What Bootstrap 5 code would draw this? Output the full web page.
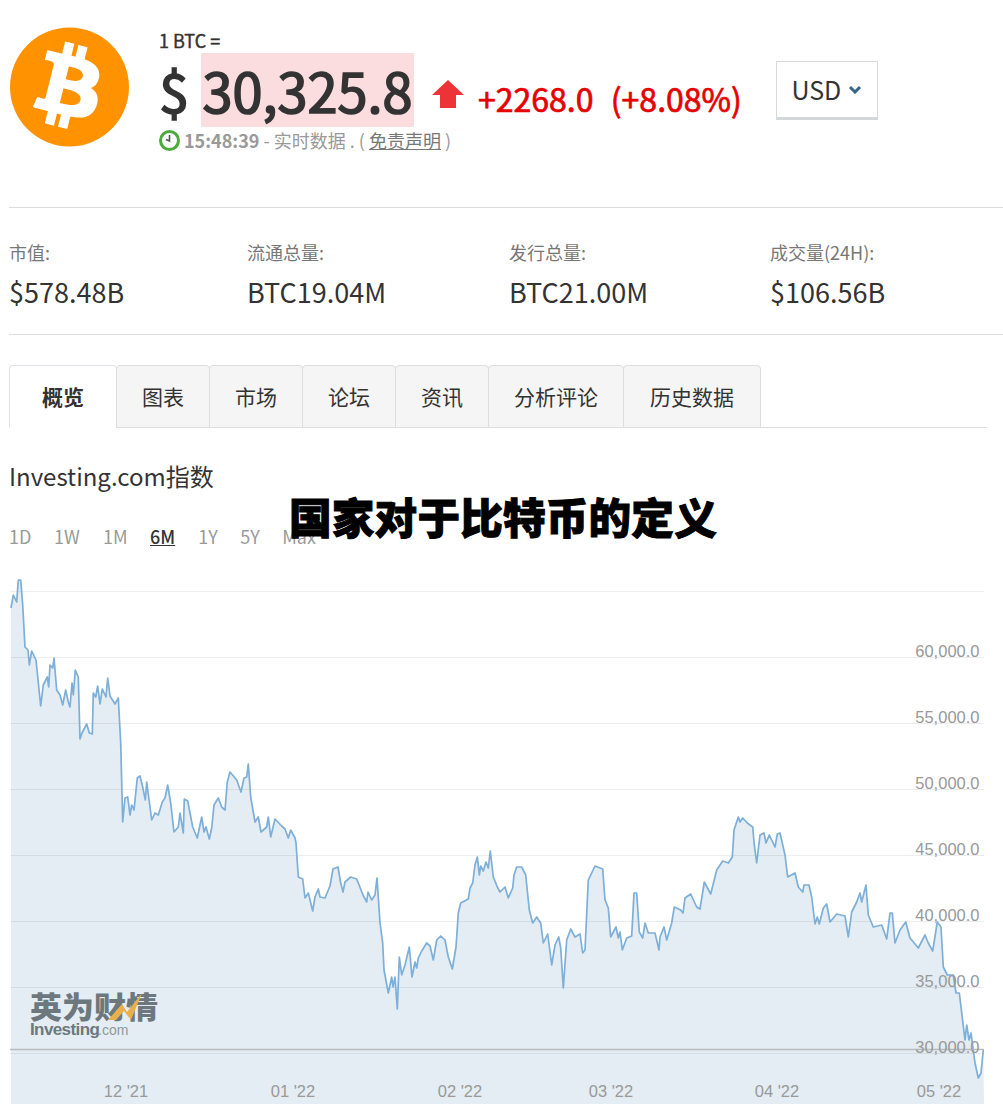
<!DOCTYPE html>
<html lang="zh-CN">
<head>
    <meta charset="UTF-8">
    <meta name="viewport" content="width=device-width, initial-scale=1.0">
    <title>国家对于比特币的定义</title>
    <link href="https://cdn.jsdelivr.net/npm/bootstrap@5.3.0/dist/css/bootstrap.min.css" rel="stylesheet">
    <style>
        body { font-family: "Noto Sans CJK SC", sans-serif; color: #333; background: #fff; width: 1003px; height: 1112px; overflow: hidden; position: relative; }
        .quote-head { height: 207px; padding: 27px 0 0 10px; }
        .coin-logo { width: 120px; height: 120px; flex: none; }
        .quote-main { margin-left: 29px; }
        .pair-name { font-size: 18px; -webkit-text-stroke: .4px #333; line-height: 26px; }
        .price-row { height: 74px; }
        .price-cur { font-size: 54px; -webkit-text-stroke: 1.7px #333; line-height: 74px; width: 42px; }
        .price-val { font-size: 54px; -webkit-text-stroke: 1.7px #333; line-height: 74px; background: #fbdddf; width: 213px; white-space: nowrap; text-align: center; }
        .up-arrow { width: 32px; height: 28px; margin: 7px 14px 0 18px; }
        .price-chg { font-size: 32px; -webkit-text-stroke: .7px #e60000; word-spacing: 1.5px; color: #e60000; line-height: 40px; margin-top: 16px; white-space: pre; }
        .time-row { font-size: 18px; line-height: 26px; color: #999; white-space: nowrap; }
        .time-row a { color: #777; }
        .time-row b { font-weight: 700; }
        .clock-ico { width: 21px; height: 21px; margin-right: 4px; }
        .cur-btn { width: 102px; height: 59px; border: 1px solid #d9d9d9; border-bottom: 3px solid #d4d7da; font-size: 25px; color: #333; margin: 34px 0 0 34px; border-radius: 0; }
        .cur-btn svg { width: 14px; height: 9px; margin-left: 7px; }
        .stats-row { height: 128px; border-top: 1px solid #ddd; border-bottom: 1px solid #ddd; margin-left: 9px; padding-top: 30px; }
        .stat-a { width: 238px; }
        .stat-b { width: 262px; }
        .stat-c { width: 261px; }
        .stat-label { font-size: 18px; line-height: 28px; color: #777; }
        .stat-value { font-size: 27px; line-height: 38px; margin-top: 7px; color: #333; }
        .tab-wrap { margin: 30px 16px 0 9px; border-bottom-color: #ddd; height: 63px; flex-wrap: nowrap; }
        .tab-wrap .nav-link { height: 63px; font-size: 21px; line-height: 61px; padding: 0; text-align: center; color: #333; background: #f5f5f5; border: 1px solid #ddd; border-radius: 4px 4px 0 0; margin-left: -1px; }
        .tab-wrap .nav-item:first-child .nav-link { margin-left: 0; }
        .tab-wrap .nav-link.active { background: #fff; font-weight: 700; border-bottom-color: #fff; color: #333; }
        .tab-w108 { width: 108px; }
        .tab-w94 { width: 94px; }
        .tab-w136 { width: 136px; }
        .tab-w138 { width: 138px; }
        .index-title { font-size: 24px; line-height: 36px; margin: 30px 0 0 9px; color: #333; }
        .range-row { margin: 29px 0 0 9px; font-size: 18px; line-height: 26px; height: 26px; }
        .range-row a { color: #999; text-decoration: none; }
        .range-row a.on { color: #333; font-weight: 500; text-decoration: underline; }
        .rng-1d { width: 45px; }
        .rng-1w { width: 49px; }
        .rng-1m { width: 47px; }
        .rng-6m { margin-right: 23px; }
        .rng-1y { width: 42px; }
        .chart-box { position: absolute; left: 0; top: 570px; width: 1003px; height: 542px; display: block; }
        .axis-txt { font-family: "Liberation Sans", sans-serif; font-size: 16.5px; fill: #999; }
        .wm-cn { font-family: "Noto Sans CJK SC", sans-serif; font-size: 30px; font-weight: 900; fill: #6c787e; }
        .wm-en { font-family: "Liberation Sans", sans-serif; font-size: 17px; font-weight: 700; fill: #6c787e; letter-spacing: -.6px; }
        .wm-com { font-family: "Liberation Sans", sans-serif; font-size: 14px; fill: #8f9a9f; }
        .page-title { position: absolute; left: 289px; top: 485px; font-size: 42.6px; letter-spacing: .2px; line-height: 62px; font-weight: 900; -webkit-text-stroke: 1px #000; color: #000; white-space: nowrap; }
    </style>
</head>
<body>
    <!-- 报价头部 -->
    <div class="quote-head d-flex">
        <svg class="coin-logo" viewBox="0 0 120 120">
            <circle cx="59.5" cy="60" r="59.5" fill="#ff9200"/>
            <g transform="translate(56.5 59.5) scale(2.1) translate(-31 -32)">
                <path fill="#fff" stroke="#fff" stroke-width=".9" d="M46.11 27.441c.636-4.258-2.606-6.547-7.039-8.074l1.438-5.768-3.512-.875-1.4 5.616c-.922-.23-1.87-.447-2.812-.662l1.41-5.653-3.509-.875-1.439 5.766c-.764-.174-1.514-.346-2.242-.527l.004-.018-4.842-1.209-.934 3.75s2.605.597 2.55.634c1.422.355 1.68 1.296 1.636 2.042l-1.638 6.571c.098.025.225.061.365.117l-.37-.092-2.297 9.205c-.174.432-.615 1.08-1.609.834.035.051-2.552-.637-2.552-.637l-1.743 4.02 4.57 1.139c.85.213 1.683.436 2.502.646l-1.453 5.835 3.507.875 1.44-5.772c.957.26 1.887.5 2.797.726L27.504 50.8l3.511.875 1.453-5.823c5.987 1.133 10.49.676 12.383-4.738 1.527-4.36-.075-6.875-3.225-8.516 2.294-.531 4.022-2.04 4.483-5.157zM38.087 38.69c-1.086 4.36-8.426 2.004-10.807 1.412l1.928-7.729c2.38.594 10.011 1.77 8.88 6.317zm1.085-11.312c-.99 3.966-7.1 1.951-9.083 1.457l1.748-7.01c1.983.494 8.367 1.416 7.335 5.553z"/>
            </g>
        </svg>
        <div class="quote-main">
            <div class="pair-name">1 BTC =</div>
            <div class="price-row d-flex">
                <div class="price-cur">$ </div>
                <div class="price-val">30,325.8</div>
                <svg class="up-arrow align-self-center" viewBox="0 0 32 28"><path fill="#ee3338" d="M16 0 32 15H24V28H8V15H0Z"/></svg>
                <div class="price-chg align-self-center">+2268.0  (+8.08%)</div>
            </div>
            <div class="time-row d-flex align-items-center">
                <svg class="clock-ico" viewBox="0 0 21 21">
                    <circle cx="10.5" cy="10.5" r="9" fill="#fff" stroke="#4eaa3c" stroke-width="3"/>
                    <path d="M10.5 5V11L7 9.5" fill="none" stroke="#555" stroke-width="1.6"/>
                </svg>
                <span><b>15:48:39</b> - 实时数据 . ( <a href="#">免责声明</a> )</span>
            </div>
        </div>
        <button type="button" class="btn cur-btn d-flex align-items-center justify-content-center p-0">USD<svg viewBox="0 0 14 9"><path d="M2 2 7 7 12 2" fill="none" stroke="#35668f" stroke-width="3"/></svg></button>
    </div>

    <!-- 市值数据 -->
    <div class="stats-row d-flex">
        <div class="stat-a"><div class="stat-label">市值:</div><div class="stat-value">$578.48B</div></div>
        <div class="stat-b"><div class="stat-label">流通总量:</div><div class="stat-value">BTC19.04M</div></div>
        <div class="stat-c"><div class="stat-label">发行总量:</div><div class="stat-value">BTC21.00M</div></div>
        <div><div class="stat-label">成交量(24H):</div><div class="stat-value">$106.56B</div></div>
    </div>

    <!-- 标签页 -->
    <ul class="nav nav-tabs tab-wrap">
        <li class="nav-item"><a class="nav-link active tab-w108" href="#">概览</a></li>
        <li class="nav-item"><a class="nav-link tab-w94" href="#">图表</a></li>
        <li class="nav-item"><a class="nav-link tab-w94" href="#">市场</a></li>
        <li class="nav-item"><a class="nav-link tab-w94" href="#">论坛</a></li>
        <li class="nav-item"><a class="nav-link tab-w94" href="#">资讯</a></li>
        <li class="nav-item"><a class="nav-link tab-w136" href="#">分析评论</a></li>
        <li class="nav-item"><a class="nav-link tab-w138" href="#">历史数据</a></li>
    </ul>

    <div class="index-title">Investing.com指数</div>
    <div class="range-row d-flex">
        <a href="#" class="rng-1d">1D</a>
        <a href="#" class="rng-1w">1W</a>
        <a href="#" class="rng-1m">1M</a>
        <a href="#" class="on rng-6m">6M</a>
        <a href="#" class="rng-1y">1Y</a>
        <a href="#" class="rng-1y">5Y</a>
        <a href="#">Max</a>
    </div>

    <!-- 走势图 -->
    <svg class="chart-box" id="chart" viewBox="0 570 1003 542">
        <polygon id="area" fill="#e4edf3"></polygon>
        <g id="grid"></g>
        <polyline id="line" fill="none" stroke="#7dafd8" stroke-width="1.7" stroke-linejoin="round"></polyline>
        <line x1="10" x2="984" y1="1049.5" y2="1049.5" stroke="#b4bcc0" stroke-width="1.5"></line>
        <text class="wm-cn" x="30" y="1018" textLength="128" lengthAdjust="spacingAndGlyphs">英为财情</text>
        <path d="M108 1020 122 1004 127 1012 142 993 131 1020 124 1011 116 1020Z" fill="#e8b04a"></path>
        <text class="wm-en" x="30" y="1035">Investing</text>
        <text class="wm-com" x="98" y="1035">.com</text>
        <g id="labels"></g>
    </svg>

    <h1 class="page-title m-0">国家对于比特币的定义</h1>

    <script src="https://cdn.jsdelivr.net/npm/bootstrap@5.3.0/dist/js/bootstrap.bundle.min.js"></script>
    <script>
        const pts = [[11,608],[13.3,595],[16.7,602],[18.3,580],[20.7,580],[22.7,605],[25,647],[28,650],[29.3,665],[31.7,651],[36,660],[40.7,706],[43.3,685],[47.3,677],[48.7,687],[50,665],[52.7,668],[54,658],[56.7,690],[60,695],[62.7,705],[65.7,690],[68.3,702],[70,707],[72,683],[73.3,695],[75.3,670],[78.3,677],[80,739],[82,733],[86.7,724],[89.3,733],[92.3,734],[93.3,693],[95.7,697],[97.7,686],[100,704],[102.3,689],[106,697],[107.7,678],[110,696],[115,704],[118.3,698],[120.7,743],[122.7,822],[125,798],[127.7,797],[130,815],[131.7,805],[134,810],[137.3,778],[140,776],[142.7,787],[145.3,800],[146.7,782],[151.7,820],[155,813],[158.3,815],[162.3,802],[165,798],[167.7,785],[170.7,803],[174,832],[178.3,827],[180,813],[183.3,833],[184.3,799],[187.7,801],[192.7,827],[197.3,838],[201.7,817],[204,832],[206,827],[209.3,839],[211.7,828],[214,805],[218.3,798],[221.7,807],[225,810],[227.3,782],[230,772],[236.7,780],[241,792],[244,778],[246.7,777],[248.3,764],[250.7,797],[255,822],[258.3,817],[261,832],[266.7,827],[268.3,817],[270.7,837],[275,819],[281.7,826],[285,829],[288.3,838],[290.7,830],[295,838],[296,843],[298.3,877],[302.7,879],[305,898],[308.3,893],[312.7,911],[315,897],[318.3,889],[320,897],[325,898],[330,886],[333,869],[338,867],[340.7,883],[343,892],[345,882],[350.7,877],[356.7,879],[363,895],[366.7,902],[368,892],[371.7,900],[375,895],[377,878],[380,923],[382.7,943],[384,970],[388.3,993],[391.7,977],[393,987],[395,977],[397.3,1009],[399.3,957],[401.7,975],[405,965],[409.3,947],[412,977],[415,962],[416.7,968],[418.3,958],[421.7,951],[426.7,943],[430,946],[433.3,960],[436.7,940],[440.7,936],[445,940],[448.3,957],[452.3,969],[456,947],[458.3,913],[460.7,903],[468.3,899],[470,888],[472.7,883],[475,865],[477.3,857],[479.3,875],[480.7,866],[483.3,871],[486,862],[488.3,868],[490.3,851],[493.3,877],[497.3,887],[500,892],[505,887],[508.3,898],[512.7,888],[514,875],[516.7,867],[521.7,867],[525.7,875],[529.3,910],[532.7,923],[536.7,917],[540.7,923],[543.3,943],[547.7,934],[551.7,965],[555,945],[558.7,937],[560.7,948],[563.3,988],[566.7,940],[570.7,929],[575,937],[580,934],[582.7,953],[585,950],[588.3,880],[595,866],[602.7,869],[605,900],[608.3,908],[610.7,937],[616,927],[618.3,938],[620,932],[622.3,950],[626.7,938],[631.7,936],[634,893],[636.7,893],[639.3,932],[642.7,938],[645,923],[648.3,933],[655,933],[659,950],[660,937],[664,927],[666.7,940],[671.7,923],[674.3,907],[680.7,910],[683,913],[685,898],[690.7,894],[696.7,907],[700,909],[704.3,882],[710.7,894],[716.7,870],[722.7,861],[728.3,863],[732.3,857],[734,830],[738.3,817],[740,822],[742.7,818],[747.3,823],[752.7,827],[754.3,845],[756.7,863],[760,835],[764,833],[766,843],[769.3,835],[775,847],[777.3,834],[780,833],[785,855],[787.7,877],[795,873],[798.3,887],[802.7,892],[804,885],[809,885],[811.7,897],[815,924],[817.3,917],[819.3,924],[823.3,908],[826.7,904],[830,922],[836.7,914],[845,916],[848.3,937],[851.7,912],[856.7,902],[860,893],[861.7,902],[866,885],[868.3,915],[873.3,927],[881.7,925],[886.7,939],[890,913],[892.3,913],[895,943],[900,930],[905.7,922],[910,938],[918.3,948],[925,935],[928.3,943],[932.7,951],[937.3,922],[941,927],[943.3,967],[947.3,975],[953.3,975],[956,993],[959.3,993],[965,1040],[966.7,1025],[969,1040],[971,1033],[975,1063],[978.3,1078],[981,1073],[983.3,1050]];

        const line = pts.map(p => p.join(',')).join(' ');
        document.getElementById('line').setAttribute('points', line);
        document.getElementById('area').setAttribute('points', '11,1104 ' + line + ' 984,1104');

        const NS = 'http://www.w3.org/2000/svg';
        function addText(parent, x, y, anchor, str) {
            const t = document.createElementNS(NS, 'text');
            t.setAttribute('class', 'axis-txt');
            t.setAttribute('x', x);
            t.setAttribute('y', y);
            t.setAttribute('text-anchor', anchor);
            t.textContent = str;
            parent.appendChild(t);
        }

        // 网格线和纵轴
        const grid = document.getElementById('grid');
        const labels = document.getElementById('labels');
        const yVals = [null, '60,000.0', '55,000.0', '50,000.0', '45,000.0', '40,000.0', '35,000.0', '30,000.0'];
        yVals.forEach((v, i) => {
            const y = 591.5 + i * 66;
            const l = document.createElementNS(NS, 'line');
            l.setAttribute('x1', 10);
            l.setAttribute('x2', 984);
            l.setAttribute('y1', y);
            l.setAttribute('y2', y);
            l.setAttribute('stroke', 'rgba(0,0,0,.07)');
            grid.appendChild(l);
            if (v) addText(labels, 979.5, y - 1, 'end', v);
        });

        // 横轴
        [[126, "12 '21"], [293, "01 '22"], [460, "02 '22"], [611, "03 '22"], [777, "04 '22"], [939, "05 '22"]].forEach(a => {
            addText(labels, a[0], 1097, 'middle', a[1]);
        });
    </script>
</body>
</html>
